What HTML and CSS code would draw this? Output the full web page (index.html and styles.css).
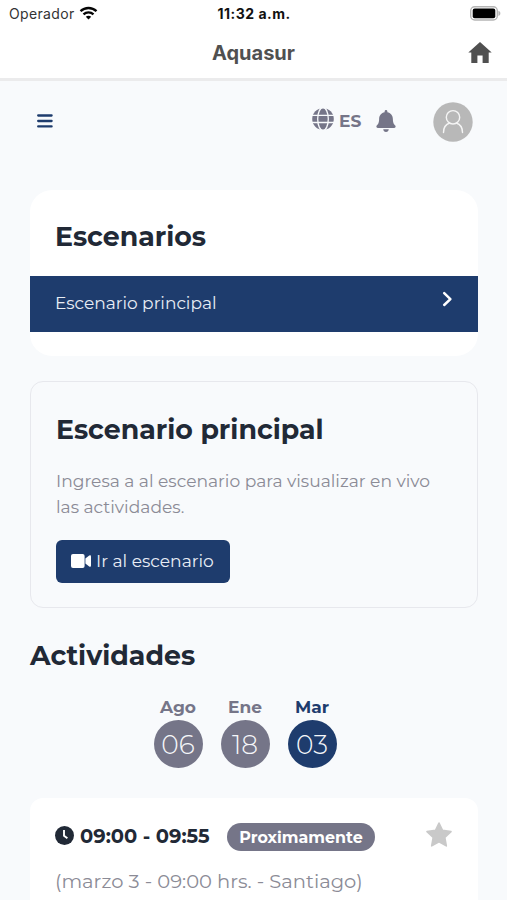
FILE: index.html
```
<!DOCTYPE html>
<html lang="es">
<head>
<meta charset="utf-8">
<meta name="viewport" content="width=device-width, initial-scale=1">
<title>Aquasur</title>
<link rel="stylesheet" href="styles.css">
</head>
<body>
<div class="status">
  <div class="carrier"><span>Operador</span>
    <svg width="19" height="14" viewBox="0 0 18 14" fill="none" stroke="#050505" stroke-width="2.3"><path d="M1 5.2C5.5.9 12.5.9 17 5.2M4 8.400c2.900-2.800 7.100-2.800 10 0"/><path d="M6.300 10.800c1.500-1.500 3.900-1.500 5.400 0L9 13.600z" fill="#050505" stroke="none"/></svg>
  </div>
  <div class="clock">11:32 a.m.</div>
  <svg class="battery" width="31" height="15" viewBox="0 0 31 15"><rect x=".7" y=".7" width="26.6" height="13.3" rx="4" fill="#fff" stroke="#b5b5b5" stroke-width="1.4"/><rect x="2.7" y="2.6" width="22.6" height="9.6" rx="2" fill="#000"/><path d="M28.4 4.8c2.6.8 2.6 4.4 0 5.2z" fill="#b5b5b5"/></svg>
</div>
<nav class="navbar">
  <span class="nav-title">Aquasur</span>
  <svg class="home" width="24" height="21" viewBox="0 0 24 21" fill="#505050"><path d="M12 0 .3 10.4h3V21h6.1v-7.4h5.2V21h6.1V10.4h3z"/></svg>
</nav>
<header class="toolbar">
  <svg class="menu" width="16" height="14" viewBox="0 0 16 14" stroke="#1e3c6d" stroke-width="2.3" stroke-linecap="round"><path d="M1.2 1.5h13.4M1.2 7h13.4M1.2 12.4h13.4"/></svg>
  <svg class="globe" width="22" height="22" viewBox="0 0 22 22"><circle cx="11" cy="11" r="10.8" fill="#757588"/><g fill="none" stroke="#f8fafc" stroke-width="1.3"><ellipse cx="11" cy="11" rx="5.3" ry="11.5"/><path d="M0 7.3h22M0 14.5h22"/></g></svg>
  <span class="lang">ES</span>
  <svg class="bell" width="20" height="22" viewBox="0 0 448 512" fill="#757588"><path d="M224 512c35.3 0 64-28.700 64-64H160c0 35.300 28.700 64 64 64zm215.400-149.700c-19.300-20.800-55.500-52-55.500-154.300 0-77.700-54.500-139.900-127.900-155.200V32c0-17.700-14.300-32-32-32s-32 14.300-32 32v20.800C118.600 68.100 64.100 130.300 64.100 208c0 102.300-36.200 133.500-55.500 154.300-6 6.400-8.700 14.100-8.600 21.700.1 16.400 13 32 32.100 32h383.800c19.100 0 32-15.600 32.100-32 0-7.600-2.600-15.300-8.600-21.700z"/></svg>
  <svg class="avatar" width="40" height="40" viewBox="0 0 40 40"><circle cx="20" cy="20" r="19.700" fill="#b8b8b8"/><g fill="none" stroke="#f5f5f5" stroke-width="1.400" stroke-linecap="round"><circle cx="20" cy="15.300" r="6.700"/><path d="M10.500 30.500c0-5.600 3.100-8.500 6.200-9.500M29.500 30.500c0-5.600-3.100-8.500-6.200-9.500"/></g></svg>
</header>
<main>
  <section class="card scenes">
    <h2>Escenarios</h2>
    <a class="scene"><span>Escenario principal</span><svg width="11" height="16" viewBox="0 0 11 16" fill="none" stroke="#fff" stroke-width="2.500" stroke-linecap="round" stroke-linejoin="round"><path d="m2.200 2.200 6.200 5.900-6.200 5.900"/></svg></a>
  </section>
  <section class="panel">
    <h2>Escenario principal</h2>
    <p>Ingresa a al escenario para visualizar en vivo<br>las actividades.</p>
    <a class="button"><svg width="20" height="14" viewBox="0 0 20 14" fill="#fff"><rect width="13.600" height="14" rx="2"/><path d="M14.400 4.600 18.200 1.600Q20 .5 20 2.600v8.800q0 2.100-1.800 1l-3.800-3z"/></svg><span>Ir al escenario</span></a>
  </section>
  <h2 class="activities-title">Actividades</h2>
  <div class="dates">
    <div class="date"><b>Ago</b><span>06</span></div>
    <div class="date"><b>Ene</b><span>18</span></div>
    <div class="date active"><b>Mar</b><span>03</span></div>
  </div>
  <article class="card activity">
    <div class="row">
      <svg class="time-icon" width="19" height="19" viewBox="0 0 19 19"><circle cx="9.500" cy="9.500" r="9.500" fill="#212936"/><path d="M9 4v5.800l3.400 2.500" fill="none" stroke="#fff" stroke-width="1.900"/></svg>
      <span class="time">09:00 - 09:55</span>
      <span class="badge">Proximamente</span>
      <svg class="star" width="26" height="25" viewBox="0 0 26 25" fill="#c9c9c9" stroke="#c9c9c9" stroke-width="1.600" stroke-linejoin="round"><path d="m13 1 3.500 7.400 8.500 1.200-6.200 5.800 1.500 8.500L13 19.900l-7.300 4 1.500-8.500L1 9.600l8.500-1.200z"/></svg>
    </div>
    <div class="when">(marzo 3 - 09:00 hrs. - Santiago)</div>
  </article>
</main>
</body>
</html>
```
FILE: styles.css
```
* { box-sizing: border-box; }
html, body { height: 900px; overflow: hidden; }
body { margin: 0; background: #f8fafc; color: #212936; font-family: Montserrat, Inter, sans-serif; }
svg { display: block; flex: none; }
h2, p { margin: 0; }
h2 { font-size: 26.8px; font-weight: 700; line-height: 33px; white-space: nowrap; }

.status { display: grid; grid-template-columns: 1fr 74px 1fr; height: 28px; background: #fff; color: #111; font-family: Inter, sans-serif; font-size: 14px; line-height: 28px; white-space: nowrap; }
.carrier { display: flex; padding-left: 9px; letter-spacing: .35px; color: #333; }
.carrier svg { margin: 6px 0 0 4px; }
.clock { padding-left: 1px; font-weight: 700; font-size: 14px; letter-spacing: .5px; }
.battery { justify-self: end; margin: 6px 6px 0 0; }

.navbar { display: grid; grid-template-columns: 1fr auto 1fr; height: 53px; background: #fff; border-bottom: 3px solid #ebebec; }
.nav-title { grid-column: 2; color: #505050; font-family: Inter, sans-serif; font-size: 20px; font-weight: 700; line-height: 50px; }
.home { justify-self: end; margin: 14px 15px 0 0; }

.toolbar { display: flex; align-items: flex-start; height: 109px; padding: 20px 34px 0 37px; }
.menu { margin-top: 13px; }
.globe { margin: 7px 0 0 auto; }
.lang { width: 22px; margin: 8px 15px 0 5px; color: #757588; font-size: 17px; line-height: 24px; font-weight: 700; }
.bell { margin: 9px 0 0; }
.avatar { margin: 1px 0 0 37px; }

main { width: 448px; margin-left: 30px; }
.card { background: #fff; }
.scenes { height: 166px; padding-top: 30px; border-radius: 22px; }
.scenes h2 { padding-left: 25px; }
.scene { display: flex; justify-content: space-between; height: 56px; margin-top: 23px; padding: 15px 25px 0; background: #1e3c6d; color: #e8edf5; font-size: 17px; line-height: 24px; }
.panel { height: 227px; margin-top: 25px; padding: 31px 24px 0; border: 1px solid #e7e8ed; border-radius: 13px; }
.panel h2 { margin-left: 1px; }
.panel p { margin-top: 22px; margin-left: 1px; color: #8b8b96; font-size: 17.1px; line-height: 26px; white-space: nowrap; }
.button { display: flex; align-items: center; width: 174px; height: 43px; margin: 20px 0 0 1px; padding-left: 15px; border-radius: 6px; background: #1e3c6d; color: #e8edf5; font-size: 17.1px; line-height: 20px; white-space: nowrap; }
.button svg { margin: -2px 5px 0 0; }
.button span { margin-top: -2px; }
.activities-title { margin-top: 31px; }

.dates { display: flex; justify-content: center; gap: 18px; margin-top: 23px; padding-right: 18px; }
.date { width: 49px; color: #757588; text-align: center; }
.date b { display: block; font-size: 17px; font-weight: 700; line-height: 24px; }
.date span { display: block; height: 48px; margin-top: 1px; border-radius: 50%; background: #757588; color: #f5f7fa; font-size: 26.5px; font-weight: 300; line-height: 49px; }
.active { color: #1e3c6d; }
.active span { background: #1e3c6d; }

.activity { height: 102px; margin-top: 30px; padding: 22px 26px 0 25px; border-radius: 13px 13px 0 0; }
.row { display: flex; align-items: flex-start; }
.time-icon { margin-top: 6px; }
.time { width: 147px; margin-left: 6px; font-size: 19.5px; font-weight: 700; line-height: 33px; white-space: nowrap; }
.badge { width: 148px; height: 28px; margin-top: 3px; border-radius: 14px; background: #757588; color: #fff; font-size: 15.9px; font-weight: 700; line-height: 29px; text-align: center; }
.star { margin: 2px 0 0 auto; }
.when { margin-top: 16px; color: #8b8b96; font-size: 19.5px; line-height: 24px; white-space: nowrap; }
```
